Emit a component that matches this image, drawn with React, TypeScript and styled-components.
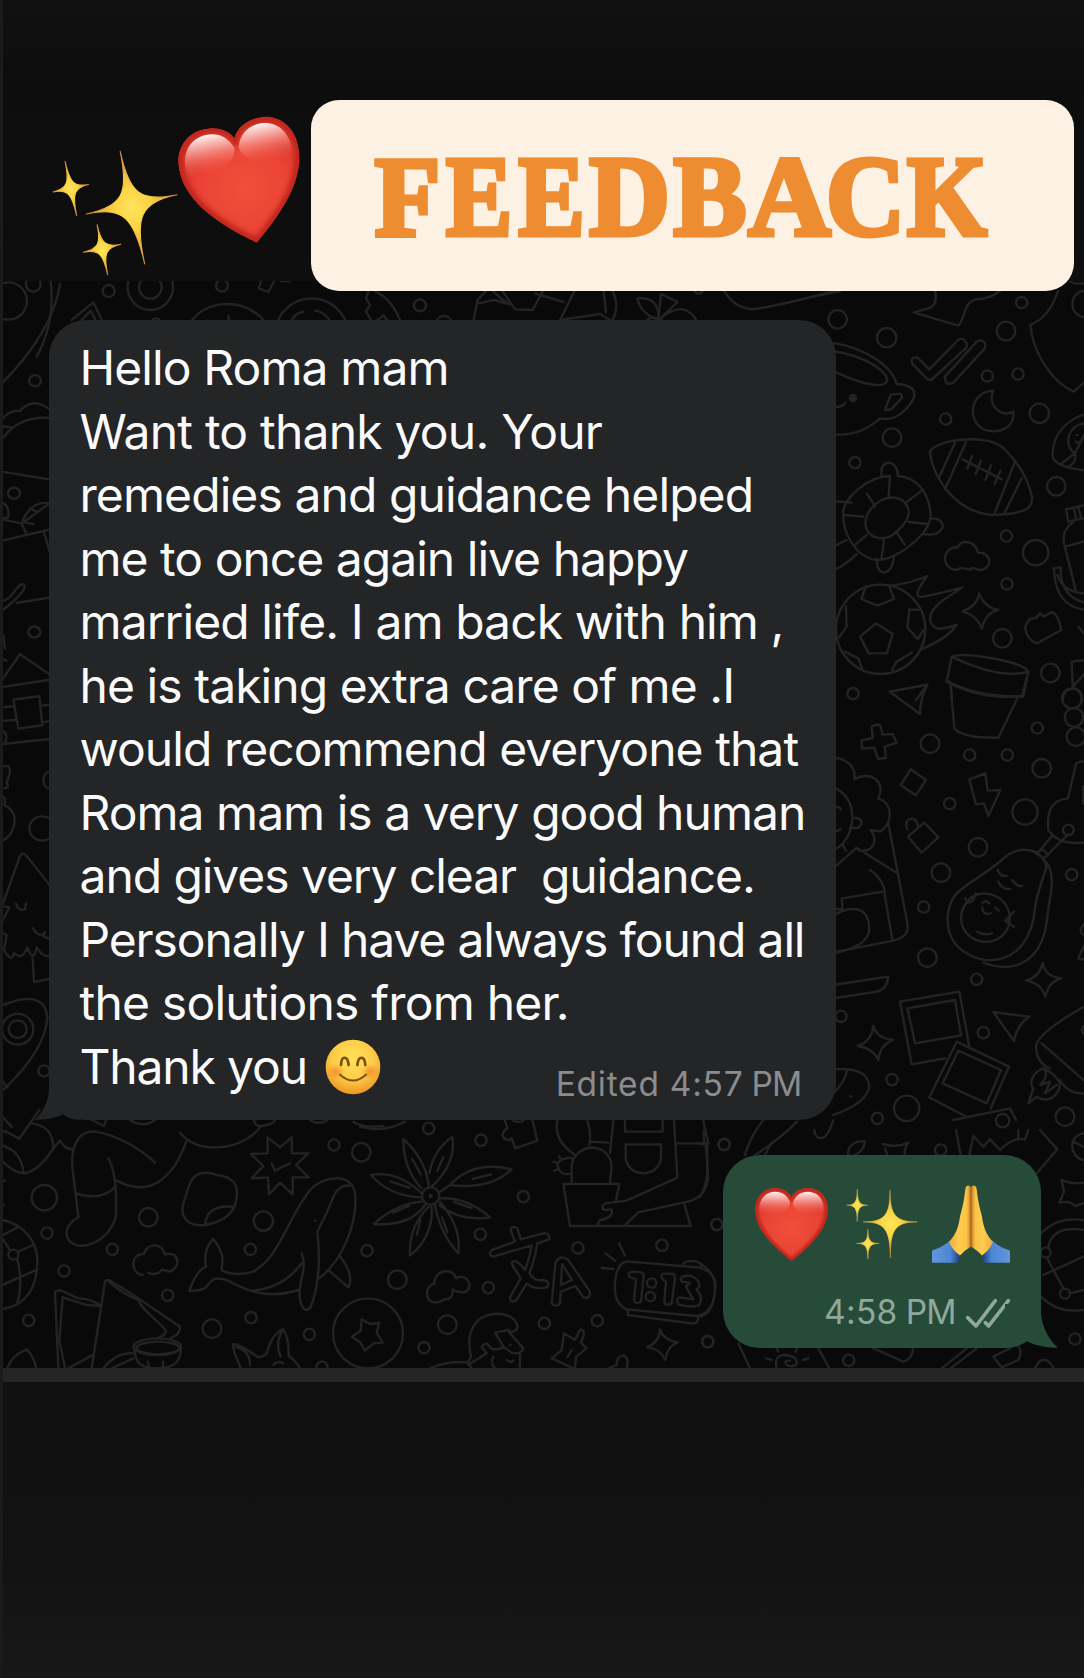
import React from "react";
import styled, { createGlobalStyle } from "styled-components";

const GlobalStyle = createGlobalStyle`
  html, body { margin: 0; padding: 0; background: #111111; }
  * { box-sizing: border-box; }
`;

const sans = `Inter, "Liberation Sans", sans-serif`;

const Page = styled.main`
  display: flex;
  flex-direction: column;
  width: 1084px;
  height: 1678px;
  overflow: hidden;
  border-left: 3px solid #1b1b1b;
  background: #111111;
  font-family: ${sans};
`;

const Header = styled.header`
  display: flex;
  align-items: flex-start;
  height: 281px;
  padding: 99.5px 0 0 55.9px;
  background: linear-gradient(#111111, #0d0d0d 30%, #0e0e0e);
`;

const Sticker = styled.div<{ $size: number; $top: number; $gap: number }>`
  flex: none;
  width: ${(p) => p.$size}px;
  height: ${(p) => p.$size}px;
  margin-top: ${(p) => p.$top}px;
  margin-right: ${(p) => p.$gap}px;
  transform: rotate(-12deg);
`;

const Banner = styled.div`
  position: relative;
  z-index: 2;
  flex: none;
  display: flex;
  align-items: center;
  width: 763px;
  height: 191px;
  padding: 4px 0 0 63px;
  border-radius: 28px;
  background: #fdf1e3;
`;

const Title = styled.h1`
  display: flex;
  margin: 0;
  font: 700 114px/1 "Liberation Serif", serif;
  color: #ee8c32;
  -webkit-text-stroke: 5px #ee8c32;
`;

const Letter = styled.span<{ $w: number; $sx: number }>`
  flex: none;
  display: flex;
  justify-content: center;
  width: ${(p) => p.$w}px;
  transform: scaleX(${(p) => p.$sx});
`;

const Chat = styled.section`
  position: relative;
  display: flex;
  flex-direction: column;
  height: 1087px;
  padding: 39px 0 0 46px;
  background: #090909;
`;

const Doodles = styled.svg`
  position: absolute;
  left: -3px;
  top: 0;
  width: 1084px;
  height: 1087px;
  fill: none;
  stroke: #232323;
  stroke-linecap: round;
  stroke-linejoin: round;
  path, circle, ellipse, rect {
    stroke-width: 2.4px;
    vector-effect: non-scaling-stroke;
  }
`;

const Incoming = styled.article`
  position: relative;
  width: 786.5px;
  height: 800px;
  padding: 16.2px 0 0 30.5px;
  border-radius: 37px;
  background: #242527;
  color: #fafafa;
`;

const Line = styled.div<{ $ls: number }>`
  height: 63.5px;
  font-size: 48px;
  line-height: 63.5px;
  letter-spacing: ${(p) => p.$ls}px;
  white-space: pre;
`;

const LastRow = styled.div`
  display: flex;
  align-items: flex-start;
  height: 63.5px;
`;

const Face = styled.svg`
  width: 56px;
  height: 56px;
  margin: 4px 0 0 18px;
`;

const Meta = styled.div<{ $color: string; $ls: number }>`
  display: flex;
  gap: 8px;
  margin-left: auto;
  font-size: 33.5px;
  line-height: 40px;
  letter-spacing: ${(p) => p.$ls}px;
  color: ${(p) => p.$color};
  white-space: pre;
`;

const Meridiem = styled.span`
  letter-spacing: -0.8px;
`;

const IncomingMeta = styled(Meta)`
  padding: 29.5px 34px 0 0;
`;

const Outgoing = styled.article`
  position: relative;
  display: flex;
  flex-direction: column;
  align-self: flex-end;
  width: 317.5px;
  height: 193.3px;
  margin: 35px 43.3px 0 0;
  padding: 30px 30px 0 32px;
  border-radius: 37px;
  background: #264c39;
`;

const EmojiRow = styled.div`
  display: flex;
  align-items: center;
  justify-content: space-between;
  height: 78px;
  padding-right: 1px;
`;

const Emoji = styled.div<{ $size: number; $indent?: number }>`
  width: ${(p) => p.$size}px;
  height: ${(p) => p.$size}px;
  margin-left: ${(p) => p.$indent ?? 0}px;
`;

const OutgoingMeta = styled(Meta)`
  padding-top: 29px;
`;

const Ticks = styled.svg`
  width: 46px;
  height: 32px;
  margin: 6px 0 0 1px;
`;

const TailLeft = styled.svg`
  position: absolute;
  left: -15px;
  bottom: 0;
  width: 47px;
  height: 44px;
`;

const TailRight = styled.svg`
  position: absolute;
  right: -17px;
  bottom: 0;
  width: 53px;
  height: 44px;
`;

const Divider = styled.div`
  height: 13.7px;
  background: #242625;
`;

const Footer = styled.footer`
  flex: 1;
  background: linear-gradient(#111111, #121212 60%, #181818);
`;

type P = [number, number];
const star = (tips: P[], c: P) => {
  const k = 0.8;
  const pull = (t: P) => `${t[0] + (c[0] - t[0]) * k} ${t[1] + (c[1] - t[1]) * k}`;
  return (
    `M${tips[0].join(" ")}` +
    tips.map((t, i) => {
      const n = tips[(i + 1) % tips.length];
      return `C${pull(t)} ${pull(n)} ${n.join(" ")}`;
    }).join("") + "Z"
  );
};

function Sparkles() {
  const id = React.useId();
  return (
    <svg viewBox="0 0 218 217" width="100%" height="100%" overflow="visible">
      <defs>
        <radialGradient id={id}>
          <stop offset="0" stopColor="#ffe45c" />
          <stop offset=".35" stopColor="#fbd645" />
          <stop offset=".65" stopColor="#efb440" />
          <stop offset="1" stopColor="#c98a45" />
        </radialGradient>
      </defs>
      <g fill={`url(#${id})`} stroke={`url(#${id})`} strokeWidth="2" strokeLinejoin="round">
        <path d={star([[134, 3], [219, 102], [135, 213], [50, 102]], [134, 102])} />
        <path d={star([[32, 0], [65, 50], [32, 101], [-1, 50]], [32, 50])} />
        <path d={star([[65, 125], [100, 169], [65, 218], [30, 169]], [65, 169])} />
      </g>
    </svg>
  );
}

function Heart() {
  const id = React.useId();
  const d = "M110 27C100 8 80 0 60 0C26 0 0 26 0 64C0 116 38 166 110 221C182 166 220 116 220 64C220 26 194 0 160 0C140 0 120 8 110 27Z";
  return (
    <svg viewBox="0 0 220 221" width="100%" height="100%">
      <defs>
        <clipPath id={id + "c"}><path d={d} /></clipPath>
        <filter id={id + "b"}><feGaussianBlur stdDeviation="3.5" /></filter>
        <linearGradient id={id + "h"} x1="0" y1="0" x2="0" y2="1">
          <stop offset="0" stopColor="#fff" stopOpacity=".95" />
          <stop offset=".35" stopColor="#ffd9d4" stopOpacity=".6" />
          <stop offset="1" stopColor="#f2523f" stopOpacity="0" />
        </linearGradient>
        <radialGradient id={id + "r"} cx=".5" cy=".55" r=".6">
          <stop offset="0" stopColor="#f0503a" />
          <stop offset=".6" stopColor="#ea4436" />
          <stop offset="1" stopColor="#d8352b" />
        </radialGradient>
      </defs>
      <g clipPath={`url(#${id}c)`}>
        <path d={d} fill={`url(#${id}r)`} />
        <path d={d} fill="none" stroke="#c1251d" strokeWidth="18" filter={`url(#${id}b)`} />
        <path d="M12 66C12 34 30 12 60 11C82 11 98 22 106 44C104 66 84 78 60 80C40 82 18 88 12 66Z" fill={`url(#${id}h)`} />
        <path d="M114 44C122 22 138 11 160 11C190 12 208 34 208 66C202 88 180 82 160 80C136 78 116 66 114 44Z" fill={`url(#${id}h)`} />
      </g>
    </svg>
  );
}

function Hands() {
  const id = React.useId();
  const half = (
    <>
      <path d="M53 167L85 207C79 215 82 226 76 233H0V196C20 191 37 181 53 167Z" fill={`url(#${id}s)`} />
      <path d="M100 12C101 -2 115 -3 117 9V184C108 190 96 198 84 211C70 202 58 188 51 170C72 148 80 124 84 94C90 72 97 44 100 12Z" fill={`url(#${id}k)`} />
    </>
  );
  return (
    <svg viewBox="0 0 234 233" width="100%" height="100%">
      <defs>
        <linearGradient id={id + "k"}>
          <stop offset="0" stopColor="#f2a93a" />
          <stop offset=".45" stopColor="#fdcd50" />
          <stop offset=".8" stopColor="#fac448" />
          <stop offset="1" stopColor="#c67a22" />
        </linearGradient>
        <linearGradient id={id + "s"}>
          <stop offset="0" stopColor="#6296dc" />
          <stop offset=".65" stopColor="#4c86d4" />
          <stop offset="1" stopColor="#183a7c" />
        </linearGradient>
      </defs>
      {half}
      <g transform="translate(234 0) scale(-1 1)">{half}</g>
      <path d="M117 10V184" stroke="#a65a18" strokeWidth="3" />
    </svg>
  );
}

function Smile() {
  return (
    <Face viewBox="0 0 168 168">
      <defs>
        <radialGradient id="face" cx=".5" cy=".35" r=".65">
          <stop offset="0" stopColor="#ffe25a" />
          <stop offset=".6" stopColor="#fccb45" />
          <stop offset="1" stopColor="#ee9526" />
        </radialGradient>
        <radialGradient id="cheek">
          <stop offset="0" stopColor="#f47f2c" stopOpacity=".75" />
          <stop offset="1" stopColor="#f47f2c" stopOpacity="0" />
        </radialGradient>
      </defs>
      <circle cx="84" cy="84" r="82" fill="url(#face)" />
      <ellipse cx="32" cy="98" rx="28" ry="24" fill="url(#cheek)" />
      <ellipse cx="136" cy="98" rx="28" ry="24" fill="url(#cheek)" />
      <g fill="none" stroke="#7b4e12" strokeLinecap="round">
        <path d="M48 78C49 49 68 49 71 78M97 78C100 49 119 49 121 78" strokeWidth="8" />
        <path d="M45 107Q84 142 123 107" strokeWidth="6" />
      </g>
    </Face>
  );
}

type Ring = [number, number, number];
const Rings = ({ at }: { at: Ring[] }) => (
  <>{at.map(([x, y, r]) => <circle key={`${x}-${y}-${r}`} cx={x} cy={y} r={r} />)}</>
);

const ringsRight: Ring[] = [
  [53, 118, 28], [200, 173, 29], [605, 68, 17], [558, 153, 28], [502, 288, 17], [594, 282, 17],
  [658, 400, 29], [377, 417, 17], [216, 473, 28], [105, 548, 17], [709, 619, 28], [559, 768, 17],
  [647, 818, 38], [561, 912, 17], [547, 1075, 28], [691, 1179, 28], [99, 1241, 17], [797, 72, 40],
];
const ringsLowerRight: Ring[] = [
  [330, 191, 28], [449, 225, 17], [562, 225, 17], [652, 144, 17], [665, 265, 28], [389, 371, 17],
  [615, 396, 38], [474, 502, 28], [363, 578, 28], [311, 681, 17], [755, 584, 17], [322, 833, 28],
  [470, 898, 17], [490, 1058, 17], [63, 1009, 17], [216, 1199, 17], [260, 1285, 38], [735, 1310, 28],
  [172, 1315, 17], [756, 55, 30], [762, 112, 28], [768, 170, 28], [745, 450, 16],
  [548, 1322, 20], [800, 1050, 14],
];
const ringsBottomLeft: Ring[] = [
  [133, 263, 38], [141, 369, 17], [192, 483, 17], [86, 631, 17], [337, 418, 17], [445, 322, 28],
  [503, 556, 17], [636, 656, 28], [753, 623, 17], [751, 418, 17], [790, 333, 29], [1002, 105, 17],
  [1084, 127, 28], [928, 673, 17], [1101, 422, 17], [966, 772, 17], [40, 434, 15],
];
const ringsBottomMid: Ring[] = [
  [206, 55, 17], [363, 91, 17], [490, 260, 17], [361, 373, 17], [112, 509, 28], [385, 533, 17],
  [262, 644, 28], [192, 713, 17], [553, 640, 17], [654, 414, 17], [712, 632, 17], [906, 406, 17],
  [1043, 695, 17], [1071, 343, 17], [1092, 104, 17], [875, 519, 14], [871, 560, 14], [212, 258, 26],
  [212, 258, 3], [24, 670, 105],
];
const ringsCorner: Ring[] = [
  [73, 43, 17], [50, 284, 17], [23, 635, 17], [446, 691, 17], [722, 60, 17], [1125, 627, 17],
  [1037, 368, 15], [1095, 491, 15], [1122, 405, 137],
];

function Wallpaper() {
  return (
    <Doodles viewBox="0 281 1084 1087">
      <g transform="translate(0 90) scale(.33333)">
        <Rings at={[[25, 633, 56], [100, 583, 22], [326, 603, 18], [451, 592, 68], [451, 592, 34], [666, 587, 18], [468, 700, 15]]} />
        <path d="M152 573Q166 700 110 800M215 690L280 637L310 700M245 690L272 662L292 700M783 573L776 595L805 606L823 573M842 573L868 574M570 700C610 630 730 620 790 690M830 700C870 600 1000 600 1040 700M872 700Q880 670 910 665M945 662Q975 665 995 700M686 678V700" />
      </g>
      <g transform="translate(300 90) scale(.5 .33333)">
        <ellipse cx="240" cy="646" rx="12" ry="18" />
        <ellipse cx="288" cy="695" rx="14" ry="17" />
        <ellipse cx="797" cy="598" rx="9" ry="13" />
        <path d="M137 603L132 625L140 645L132 665L142 690M150 603Q185 630 200 690M155 690L167 676L177 695M372 603L355 630L346 700M386 603Q400 625 418 642L388 630L358 640M405 603L430 658L465 660L486 603M470 610L527 636M549 603L520 690L600 672L630 700M607 603L612 668M625 603Q640 650 625 690M675 625Q720 620 717 690Q680 670 675 625ZM722 612L755 636L717 690ZM717 690Q770 620 796 700M848 603Q870 655 905 658Q950 650 1070 603M690 700Q700 665 735 700" />
      </g>
      <g transform="translate(820 280) scale(.33333)">
        <Rings at={ringsRight} />
        <path d="M345 33Q355 75 325 85L281 97L415 137C435 120 430 65 468 58C500 58 520 48 540 33M714 33Q690 110 631 135C638 220 700 310 762 335L800 300M0 45L60 33M745 0Q770 20 800 5" />
        <path d="M276 250Q270 230 292 232L328 268L414 180Q432 170 440 190L440 202L334 300L322 298L276 250M375 290L470 185Q490 174 496 194L494 206L400 308Q375 320 375 290" />
        <path d="M0 190C80 180 210 240 230 312C290 315 300 345 255 390Q220 425 180 415Q120 470 40 463M0 216C80 200 215 270 200 305C180 335 60 290 0 250M212 344L242 341L247 352L213 388L195 390ZM40 382Q68 382 76 368" />
        <circle cx="99" cy="354" r="9" fill="#232323" />
        <path d="M520 332C450 335 440 420 490 448C540 466 585 440 580 395C545 415 500 375 520 332ZM330 515C345 480 490 460 545 500C600 550 625 600 636 650C640 690 610 700 520 705C410 700 335 590 330 515ZM405 488L358 590M438 486L375 628M583 550L523 702M605 595L553 700M428 538L546 598M456 528L442 566M483 542L467 582M513 556L496 600M541 572L524 612" />
        <path d="M185 588C175 535 235 535 233 588C290 590 330 640 332 710C325 770 225 840 170 840C100 830 65 750 70 690C80 650 140 590 210 588M150 690C190 640 250 640 266 690C270 720 235 755 210 770C150 790 115 740 150 690ZM210 590L206 648M302 634L258 668M325 732L266 726M254 794L228 754M184 838L192 780M106 794L140 765M73 705L130 710M140 640L166 680M0 660L95 668M332 715Q370 715 368 742Q355 770 312 762M170 836C168 895 220 890 221 828M0 820L80 780M0 868C50 880 80 850 110 822" />
        <path d="M410 870C360 865 365 800 413 802C420 778 465 780 474 818C515 815 520 865 482 870C465 870 460 856 450 870C435 864 420 860 410 870ZM478 940Q490 980 534 990Q495 1000 486 1046Q470 1005 428 994Q470 980 478 940ZM628 1018L650 1012L660 1000L672 1010L694 996Q714 1000 724 1050L650 1090Q620 1080 615 1040Z" />
        <circle cx="182" cy="1048" r="134" />
        <path d="M168 1030L218 1062L200 1120L146 1120L120 1070ZM138 918L124 957L172 977L222 957L208 918M268 988L262 1042L293 1077L310 1050M268 988L296 990M78 978L80 1040L57 1072M75 1115L115 1135L126 1165M275 1118L230 1145L216 1170M215 917Q270 910 322 888C290 930 280 955 310 950Q360 940 428 922C360 965 330 985 330 1020C340 1060 375 1045 410 1035C385 1070 345 1090 300 1110" />
        <path d="M395 1130C440 1115 610 1145 625 1175Q540 1200 395 1130L380 1205Q480 1260 606 1248L625 1175M392 1215L396 1260M210 1235L322 1214L288 1260M210 1235L245 1262" />
        <path d="M800 400C740 420 700 460 698 520Q690 560 800 572M800 430C740 430 730 500 765 520L725 550M765 520L800 450M765 520Q770 550 745 560M770 465L772 465M768 485Q778 492 782 482M738 688L800 674M738 688L745 725L790 715M762 686L768 718M775 683L784 716M760 726Q725 750 732 790L768 935M735 800L800 782M700 865L722 862Q718 950 800 970M702 868C705 950 740 985 800 990M712 885Q730 940 800 940M775 1040L800 1070M755 1145L800 1140M755 1145L758 1220L800 1175M728 1262Q730 1225 765 1225Q785 1230 785 1262" />
      </g>
      <g transform="translate(820 680) scale(.33333)">
        <Rings at={ringsLowerRight} />
        <path d="M210 35L322 14Q300 55 300 102ZM378 0Q460 50 610 50L620 0M392 20L403 145Q430 175 535 173L592 55M155 140Q170 130 182 138L187 164L218 162L230 188L194 200L198 234L174 237L163 203L127 206L124 182L158 174ZM272 268L318 300L287 346L242 315ZM448 298L496 280L503 332L541 330L505 408L492 370L468 373ZM262 448C245 410 295 405 294 440M264 470L313 428L355 472L305 518Z" />
        <path d="M0 240C60 220 110 250 103 298C150 270 200 305 175 355C220 370 220 430 180 455L152 450C180 490 150 520 115 510M40 320Q100 350 97 420C90 480 60 510 0 530M97 412Q130 415 124 432Q115 450 95 442M45 385Q55 375 62 388M45 455L62 448M40 565L110 503L232 580M205 430L262 730Q270 770 220 782L0 825M68 495L78 512M150 570Q195 600 195 650L217 780M190 634L65 656L68 690L40 684M40 708C80 680 145 670 148 745Q148 800 40 820M40 915L205 890Q200 930 170 935L40 955" />
        <path d="M800 245Q765 240 765 265L744 355C690 360 680 400 685 450Q720 500 800 486M694 470L650 522L672 535L745 462M650 518L668 508L682 522M545 540C600 490 665 505 680 560C660 620 645 660 640 720C610 850 500 860 440 820C370 780 370 690 410 640C440 610 500 580 545 540ZM678 545C710 590 690 640 682 710C670 840 590 885 490 848M495 640C440 640 410 700 430 745C460 800 540 800 565 740C580 690 550 645 495 640ZM435 655L445 668L458 664L468 640M533 570Q540 590 560 588M577 600Q590 620 606 618M535 605Q545 630 570 627M488 668Q500 660 508 670M525 682L536 692M487 682Q485 705 512 700M472 755Q490 768 516 760M582 695L556 722L582 740" />
        <path d="M668 848Q675 890 724 895Q685 905 676 950Q665 910 618 902Q660 890 668 848ZM160 1038Q170 1075 220 1080Q180 1095 175 1140Q160 1105 113 1098Q155 1085 160 1038ZM520 996L628 1010Q590 1035 582 1083ZM240 965L418 935L448 1100M240 965L275 1153L375 1135M262 985L405 960L423 1066L285 1090ZM410 1085L567 1160L512 1285M410 1085L328 1252L435 1308M415 1112L543 1170L500 1270L368 1210ZM400 1320L570 1285L588 1320M800 975Q650 1060 648 1100Q650 1150 690 1165M665 1090L800 1208M720 1200Q745 1245 800 1240M670 1165C630 1180 630 1215 640 1225L625 1270L650 1250C690 1275 720 1240 720 1210Q705 1180 670 1165M670 1165Q690 1185 660 1215L690 1205L675 1240L710 1215M40 1168Q145 1160 148 1220Q140 1270 40 1305M80 1175Q75 1205 40 1240M90 1249L94 1249M800 725Q770 750 790 765M800 780L775 835L800 840M790 370V320" />
      </g>
      <g transform="translate(0 1110) scale(.33333)">
        <Rings at={ringsBottomLeft} />
        <path d="M0 60L20 66L58 86L118 0M95 40C140 45 160 75 160 115C120 180 80 195 60 188C30 180 15 160 0 145M0 105Q65 120 70 188M160 115L180 92Q195 120 220 118M275 30L312 48L318 30M390 30Q430 55 465 30M235 320L218 180C210 110 235 60 285 65C350 75 420 115 465 158M325 145Q345 180 348 250V320C330 380 280 410 235 407C190 395 185 350 237 320M228 250Q300 275 345 232M350 212C450 265 520 205 560 92M540 68Q580 115 650 112C720 112 770 70 780 50M762 30Q765 55 800 45Q822 40 825 30M932 32Q955 45 980 32M1060 35Q1090 55 1150 48" />
        <path d="M802 82L840 112L875 82L876 130L925 130L888 165L926 202L878 202V253L840 218L807 253L804 202L755 205L790 168L753 132L803 130ZM815 160L825 182L870 160M615 345C560 350 540 320 550 280L568 225C580 190 610 180 650 195C700 200 715 225 710 260Q705 330 615 345ZM615 345Q620 285 695 290" />
        <path d="M568 542Q590 480 618 470C610 430 625 400 640 387C680 440 665 455 665 480C690 495 730 495 760 485C840 440 860 330 930 240C980 190 1065 190 1066 260C1070 340 1030 450 957 505M895 540C800 570 735 540 680 510C640 500 640 505 615 535Q590 545 568 542M752 543Q850 535 905 460M905 430C925 480 890 520 900 570Q910 610 930 595C960 530 960 430 952 365Q990 290 1000 260Q1020 220 1048 228M985 480L1045 532Q1065 500 1020 438M944 332L946 332M428 495C390 490 390 430 432 432C440 400 485 395 494 433C540 420 545 480 505 485L486 478C475 495 455 495 445 488" />
        <path d="M0 328C70 340 115 395 112 460C110 530 80 590 0 598M0 380L52 352M0 375L30 420M54 425L100 405M52 448Q70 520 52 578M0 528L112 478M22 775Q35 735 80 718Q105 745 108 775M175 775L165 545L180 540L235 565Q270 565 305 588M305 588L260 585L188 562L178 690L195 775M275 775L315 515Q325 505 335 515L390 548L540 650Q540 675 510 685M325 513Q365 550 415 570M415 570C430 610 500 650 498 665Q490 680 475 683M205 775L278 735M310 775Q350 725 400 730M335 775L400 745" />
        <ellipse cx="472" cy="710" rx="71" ry="25" /><ellipse cx="474" cy="714" rx="64" ry="19" />
        <path d="M402 710C405 760 420 775 472 775C530 775 542 750 543 710M444 755L448 775M490 755L488 775M722 775C710 740 695 720 700 702C725 705 750 725 775 742Q790 740 800 732C810 690 830 665 850 657C870 690 865 720 866 738Q890 755 900 775M708 712Q750 720 750 765M845 665Q825 700 842 740M820 765Q830 750 850 760M0 220L15 212M0 285H12" />
      </g>
      <g transform="translate(360 1110) scale(.33333)">
        <Rings at={ringsBottomMid} />
        <path d="M207 235Q200 150 130 87Q130 180 185 235M215 230Q290 160 277 80Q220 120 208 190M186 250Q110 180 33 195Q90 260 186 262M185 275Q110 280 42 342Q150 350 195 285M207 290Q145 350 150 437Q220 380 215 290M225 285Q240 370 295 430Q305 350 240 275M240 265Q320 260 390 322Q300 335 238 285M270 225Q340 150 455 178Q390 240 270 225L240 245M157 147L182 193M250 142L232 182M92 215L148 233M98 308L147 288M181 330L171 374M246 323L262 366M282 276L335 294M338 207L393 193" />
        <path d="M435 32L442 55Q420 70 432 85Q450 95 455 85L466 115L532 92L518 32M592 32Q580 90 645 135M682 32Q695 70 688 105M690 95L745 98M760 32L750 130M635 215V165C650 95 750 95 755 170L750 218M610 222H778L768 272M610 222L630 348H992L974 285M635 190Q600 200 592 165Q600 140 638 145M580 155L592 160M582 182L595 178M597 138L602 148M795 32V65H908V32M797 103H903V145Q895 188 850 190Q805 188 797 145ZM942 32L952 203L800 272L735 280Q718 295 735 300L755 298Q760 325 720 330L712 345M1030 32L1045 100H952M1037 102L1044 195C1045 240 1020 270 970 278L835 307L795 345" />
        <path d="M452 355Q468 345 474 360L482 388L550 370Q570 368 568 388L532 400C525 440 520 465 508 488Q520 515 550 510Q570 512 562 532Q520 540 500 520L468 572Q450 580 450 562L482 505L455 462Q460 445 478 460L495 480Q510 440 515 406L400 440Q382 435 395 420L465 395L452 360M575 580L586 460Q600 430 625 450L690 545Q690 570 670 562L646 528L602 545L600 580Q585 595 575 580M606 462L603 525L636 510ZM253 568C220 590 195 570 203 540Q210 520 223 522C220 480 280 470 288 505C325 485 345 540 310 547Q285 545 278 538Q280 570 253 568ZM725 474L760 477M737 430L765 452M777 400L795 437M970 462Q975 450 1010 455Q1025 460 1025 475M765 520Q770 450 810 455L1020 473Q1075 490 1065 540Q1060 610 1010 618L800 598Q760 580 765 520ZM803 598V615L1000 641Q1015 640 1015 622" />
        <path d="M808 500Q800 485 820 485L845 487Q853 490 850 505L843 575Q825 585 822 570L828 508ZM905 505Q900 490 920 491L942 492L945 505L935 580Q915 590 913 575L918 515ZM962 505Q970 495 995 498Q1020 510 1018 530L1010 540Q1032 560 1018 585Q995 595 955 583Q945 565 960 562L1000 568L985 543L978 530L990 518L965 515Z" />
        <path d="M5 628L30 642L58 638L50 668L68 698L40 700L15 722L0 696L-25 680L2 663ZM325 755L333 740Q320 680 340 650C365 600 450 600 470 640C480 665 450 670 445 660L405 668L432 712Q400 725 390 712Q380 690 365 712L380 730L325 765M448 668L490 715Q485 735 455 728L432 712M400 740Q390 760 405 775M480 735V775M440 750Q450 760 460 752M450 705L452 705M210 775Q270 750 325 758L335 775M575 745L605 720L612 670L645 690L660 660Q675 655 670 680L662 698L680 715L648 740L645 775M575 745L640 775M635 720L622 742M745 775L770 765Q770 735 792 737Q808 745 800 775M900 658Q910 690 953 697Q920 710 916 750Q900 715 862 712Q900 695 900 658Z" />
        <path d="M0 50Q70 70 135 35M460 32Q475 40 490 32" />
      </g>
      <g transform="translate(700 1130) scale(.33333)">
        <Rings at={ringsCorner} />
        <path d="M0 42H22V130Q15 180 0 200M12 0V42M135 75Q150 20 190 -30M165 75Q250 20 290 -25M215 38L195 75M343 0Q345 25 365 25Q385 20 400 -30M445 75C440 45 470 30 495 35Q490 65 465 75M548 42Q590 55 625 38Q610 60 615 75M555 55L562 75M768 0L782 75M808 75L820 18L850 50L870 28L900 60Q940 20 975 28L985 0M955 0V22M1020 0L1072 58L1010 130M1150 10C1100 20 1110 80 1150 90M1120 35L1150 50M1085 150Q1120 165 1150 158M1085 150L1092 185L1078 218Q1110 210 1125 228L1150 220M1030 435L1150 380M1045 350Q1060 285 1150 300M1040 382L1090 475M1110 490L1150 480M0 400Q50 430 45 480Q40 550 0 560M115 640L150 715M355 655L388 715M520 655L610 695Q635 690 640 655M725 715L800 655M752 715L830 655M880 680L905 712L955 690Q970 660 950 645M880 680L930 655M1005 715Q1030 665 1060 712M230 715Q220 675 255 675Q295 680 290 700Q280 715 260 705Q250 690 270 692M198 685L215 690M325 685L308 690M230 655L235 665M292 655L287 665" />
      </g>
      <g transform="translate(0 270) scale(.33333 .54855)">
        <ellipse cx="105" cy="202" rx="18" ry="10" /><ellipse cx="42" cy="407" rx="18" ry="10" /><ellipse cx="103" cy="660" rx="18" ry="10" /><ellipse cx="132" cy="1460" rx="17" ry="10" /><ellipse cx="126" cy="1018" rx="38" ry="22" /><ellipse cx="150" cy="930" rx="20" ry="16" /><ellipse cx="53" cy="1384" rx="47" ry="28" /><ellipse cx="53" cy="1384" rx="27" ry="16" />
        <path d="M9 205Q160 110 180 25M9 270Q30 255 60 257Q100 230 150 255M9 285L35 287M9 306Q60 265 150 270M9 368L150 382M9 425Q28 430 25 450L9 453M9 455L65 462L150 425M65 462L78 480M9 493L150 473M65 462Q90 420 150 425M90 435L112 441M72 460L100 463M132 478L150 515M9 603C40 600 50 570 70 573Q90 580 9 620M50 607L150 597M9 745L60 700L150 738M9 760L150 747M40 783L118 777L127 830L55 836ZM9 797L42 795M9 822L48 820M120 795L150 792M125 825L150 822M9 864L150 855M9 665L15 690M9 710L20 712M9 840Q25 845 15 864M9 905Q35 900 28 920L20 935Q30 945 9 945M9 960Q20 965 12 975Q65 990 30 1030L9 1040M9 1155L60 1068Q70 1060 80 1068L150 1122M48 1155Q55 1170 75 1165L78 1155M9 1160L28 1162L9 1185M9 1210L20 1212L12 1240Q35 1265 42 1245Q65 1260 82 1235Q100 1265 110 1235Q130 1255 150 1250M98 1200Q120 1220 135 1207L130 1215L150 1220M98 1255L102 1298L150 1292M9 1340Q130 1310 142 1360Q140 1420 9 1495M9 1480L22 1490M9 1545L35 1562" />
      </g>
    </Doodles>
  );
}

const letters: { c: string; w: number; sx: number }[] = [
  { c: "F", w: 67, sx: 0.94 },
  { c: "E", w: 76, sx: 0.87 },
  { c: "E", w: 69, sx: 0.87 },
  { c: "D", w: 87, sx: 0.98 },
  { c: "B", w: 74, sx: 0.96 },
  { c: "A", w: 85, sx: 1 },
  { c: "C", w: 67, sx: 0.96 },
  { c: "K", w: 95.6, sx: 0.9 },
];

const message: { text: string; ls: number }[] = [
  { text: "Hello Roma mam", ls: -0.9 },
  { text: "Want to thank you. Your", ls: -0.79 },
  { text: "remedies and guidance helped", ls: -0.91 },
  { text: "me to once again live happy", ls: -0.98 },
  { text: "married life. I am back with him ,", ls: -0.91 },
  { text: "he is taking extra care of me .I", ls: -0.94 },
  { text: "would recommend everyone that", ls: -0.95 },
  { text: "Roma mam is a very good human", ls: -0.98 },
  { text: "and gives very clear  guidance.", ls: -1.07 },
  { text: "Personally I have always found all", ls: -1.13 },
  { text: "the solutions from her.", ls: -0.8 },
];

export default function App() {
  return (
    <Page>
      <GlobalStyle />
      <Header>
        <Sticker $size={119.6} $top={51.5} $gap={4.3}><Sparkles /></Sticker>
        <Sticker $size={122} $top={22} $gap={6.2}><Heart /></Sticker>
        <Banner>
          <Title>
            {letters.map((l, i) => <Letter key={i} $w={l.w} $sx={l.sx}>{l.c}</Letter>)}
          </Title>
        </Banner>
      </Header>
      <Chat>
        <Wallpaper />
        <Incoming>
          <TailLeft viewBox="102 198 141 132" fill="#242527">
            <path d="M147 198V230C147 275 130 305 103 330C140 330 165 325 190 313C200 322 215 330 243 330V198Z" />
          </TailLeft>
          {message.map((l) => <Line key={l.text} $ls={l.ls}>{l.text}</Line>)}
          <LastRow>
            <Line $ls={-1.15}>Thank you</Line>
            <Smile />
            <IncomingMeta $color="#8b8c8e" $ls={0.75}><span>Edited 4:57</span><Meridiem>PM</Meridiem></IncomingMeta>
          </LastRow>
        </Incoming>
        <Outgoing>
          <TailRight viewBox="915 524 159 132" fill="#264c39">
            <path d="M915 524H1022V545C1025 590 1045 630 1073 655C1035 656 1005 648 980 636C965 648 945 656 915 656Z" />
          </TailRight>
          <EmojiRow>
            <Emoji $size={73}><Heart /></Emoji>
            <Emoji $size={70} $indent={5}><Sparkles /></Emoji>
            <Emoji $size={78}><Hands /></Emoji>
          </EmojiRow>
          <OutgoingMeta $color="#90a89b" $ls={0.3}>
            <span>4:58</span><Meridiem>PM</Meridiem>
            <Ticks viewBox="796 498 138 96" fill="none" stroke="#90a89b" strokeWidth="11" strokeLinecap="round" strokeLinejoin="round">
              <path d="M804 557L829 582L887 506M857 572L867 582L926 506" />
            </Ticks>
          </OutgoingMeta>
        </Outgoing>
      </Chat>
      <Divider />
      <Footer />
    </Page>
  );
}
